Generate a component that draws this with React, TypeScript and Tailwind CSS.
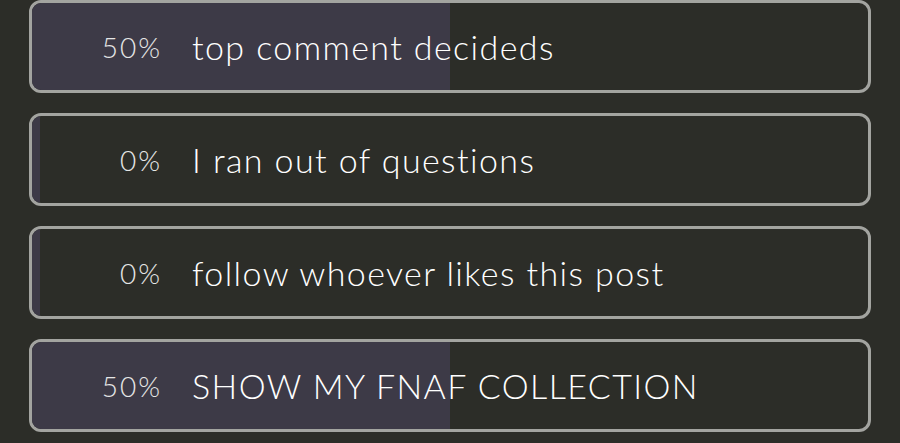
import React from "react";

interface PollOption {
  label: string;
  percent: number;
}

const options: PollOption[] = [
  { label: "top comment decideds", percent: 50 },
  { label: "I ran out of questions", percent: 0 },
  { label: "follow whoever likes this post", percent: 0 },
  { label: "SHOW MY FNAF COLLECTION", percent: 50 },
];

const PollRow = ({ label, percent }: PollOption) => (
  <div className="relative h-[93px] rounded-[12px] border-[3px] border-[#a3a4a0] overflow-hidden">
    {/* result bar */}
    <div
      className="absolute inset-y-0 left-0 min-w-[8px] bg-[#3d3a47]"
      style={{ width: `${percent}%` }}
    />
    <div className="relative flex h-full items-center">
      <span className="w-[130px] text-right text-[28px] font-light tracking-[2px] text-[#e6e6e6]">
        {percent}%
      </span>
      <span className="ml-[30px] text-[34px] font-light tracking-[1.4px] text-white">{label}</span>
    </div>
  </div>
);

export default function App() {
  return (
    <div
      className="h-[443px] w-[900px] overflow-hidden bg-[#2c2d28] pl-[29px] pr-[29px]"
      style={{ fontFamily: "Lato, 'Noto Sans', sans-serif" }}
    >
      <div className="flex flex-col gap-5">
        {options.map((o) => (
          <PollRow key={o.label} {...o} />
        ))}
      </div>
    </div>
  );
}
